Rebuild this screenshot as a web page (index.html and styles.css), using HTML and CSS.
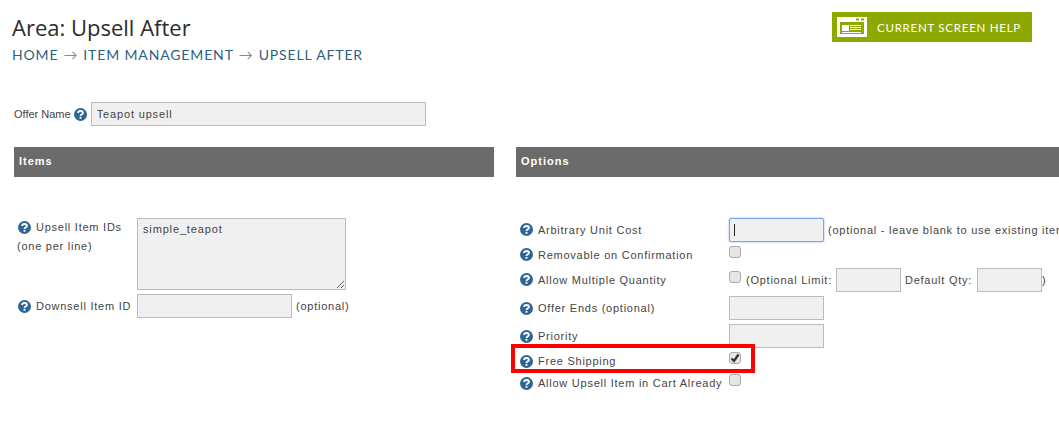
FILE: index.html
```html
<!DOCTYPE html>
<html lang="en">
<head>
  <meta charset="UTF-8">
  <title>Area: Upsell After</title>
  <link rel="stylesheet" href="styles.css">
</head>
<body>

  <!-- Page header -->
  <div class="cabecera">
    <div>
      <h1 class="titulo">Area: Upsell After</h1>
      <div class="migas">
        <span>Home</span><span class="flecha">&#8594;</span><span>Item Management</span><span class="flecha">&#8594;</span><span>Upsell After</span>
      </div>
    </div>
    <a class="boton-ayuda">
      <svg class="icono-ayuda" width="30" height="20" viewBox="0 0 30 20">
        <path fill="#fff" fill-rule="evenodd" d="M0 0H30V20H0ZM3 5V17H27V5ZM19 1.500V3.500H22V1.500ZM24 1.500V3.500H27V1.500Z"/>
        <path fill="#fff" d="M5 8H12V14H5ZM13 8H24V9H13ZM13 10H24V11H13ZM13 12H24V13H13ZM5 15H24V16H5Z"/>
      </svg>
      Current Screen Help
    </a>
  </div>

  <!-- Offer name -->
  <div class="fila-oferta">
    <label class="etiqueta-oferta">Offer Name</label>
    <svg class="ayuda" viewBox="0 0 14 14"><use href="#interrogante"/></svg>
    <input class="campo campo-oferta" type="text" value="Teapot upsell">
  </div>

  <div class="columnas">

    <!-- Items -->
    <div class="col-items">
      <div class="barra">Items</div>
      <div class="fila-items fila-ids">
        <div class="etiqueta-ids">
          <div class="etiqueta"><svg class="ayuda" viewBox="0 0 14 14"><use href="#interrogante"/></svg>Upsell Item IDs</div>
          <div class="nota">(one per line)</div>
        </div>
        <textarea class="campo area-ids">simple_teapot</textarea>
      </div>
      <div class="fila-items">
        <div class="etiqueta etiqueta-ids"><svg class="ayuda" viewBox="0 0 14 14"><use href="#interrogante"/></svg>Downsell Item ID</div>
        <input class="campo campo-down" type="text">
        <span class="texto">(optional)</span>
      </div>
    </div>

    <!-- Options -->
    <div class="col-opciones">
      <div class="barra">Options</div>
      <div class="opciones">
        <div class="opcion alto-25">
          <div class="etiqueta"><svg class="ayuda" viewBox="0 0 14 14"><use href="#interrogante"/></svg>Arbitrary Unit Cost</div>
          <div class="valor">
            <input class="campo campo-medio activo" type="text">
            <span class="cursor"></span>
            <span class="texto">(optional - leave blank to use existing item cost)</span>
          </div>
        </div>
        <div class="opcion alto-25">
          <div class="etiqueta"><svg class="ayuda" viewBox="0 0 14 14"><use href="#interrogante"/></svg>Removable on Confirmation</div>
          <div class="valor"><span class="casilla"></span></div>
        </div>
        <div class="opcion alto-25 fila-limite">
          <div class="etiqueta"><svg class="ayuda" viewBox="0 0 14 14"><use href="#interrogante"/></svg>Allow Multiple Quantity</div>
          <div class="valor">
            <span class="casilla"></span>
            <span class="texto texto-limite">(Optional Limit:</span>
            <input class="campo campo-corto" type="text">
            <span class="texto texto-qty">Default Qty:</span>
            <input class="campo campo-corto" type="text">
            <span class="texto">)</span>
          </div>
        </div>
        <div class="opcion alto-28">
          <div class="etiqueta"><svg class="ayuda" viewBox="0 0 14 14"><use href="#interrogante"/></svg>Offer Ends (optional)</div>
          <div class="valor"><input class="campo campo-medio" type="text"></div>
        </div>
        <div class="opcion alto-28">
          <div class="etiqueta"><svg class="ayuda" viewBox="0 0 14 14"><use href="#interrogante"/></svg>Priority</div>
          <div class="valor"><input class="campo campo-medio" type="text"></div>
        </div>
        <div class="opcion alto-22 marcada">
          <div class="etiqueta"><svg class="ayuda" viewBox="0 0 14 14"><use href="#interrogante"/></svg>Free Shipping</div>
          <div class="valor">
            <span class="casilla">
              <svg width="10" height="10" viewBox="0 0 10 10"><path fill="none" stroke="#333" stroke-width="2.200" d="M1.500 5.500L4 8L8.500 1.500"/></svg>
            </span>
          </div>
        </div>
        <div class="opcion alto-22">
          <div class="etiqueta"><svg class="ayuda" viewBox="0 0 14 14"><use href="#interrogante"/></svg>Allow Upsell Item in Cart Already</div>
          <div class="valor"><span class="casilla"></span></div>
        </div>
      </div>
    </div>
  </div>

  <!-- Shared help icon -->
  <svg class="oculto" width="0" height="0">
    <symbol id="interrogante" viewBox="0 0 14 14">
      <circle cx="7" cy="7" r="7" fill="#2d6596"/>
      <path fill="none" stroke="#fff" stroke-width="2" d="M4.400 5.500C4.400 4 5.600 3.200 7 3.200C8.500 3.200 9.600 4.100 9.600 5.300C9.600 6.800 7 6.800 7 8.600"/>
      <rect x="6" y="9.600" width="2" height="2" fill="#fff"/>
    </symbol>
  </svg>
</body>
</html>
```

FILE: styles.css
```css
html, body {
  height: 431px;
  overflow: hidden;
}

body {
  margin: 0;
  background-color: #fff;
  font-family: "Liberation Sans", Arial, sans-serif;
  font-size: 11px;
  letter-spacing: 0.750px;
  color: #444;
}

.cabecera {
  display: flex;
  justify-content: space-between;
  align-items: flex-start;
  padding: 12px 27px 0 12px;
  height: 90px;
  box-sizing: border-box;
}

.titulo {
  margin: 0;
  font-family: "Open Sans", sans-serif;
  font-size: 22px;
  line-height: 30px;
  font-weight: 400;
  letter-spacing: 0;
  color: #2b2b2b;
}

.migas {
  margin-top: 3px;
  font-family: Lato, sans-serif;
  font-size: 14px;
  line-height: 20px;
  letter-spacing: 0.860px;
  text-transform: uppercase;
  color: #2f5f80;
}

.flecha {
  margin: 0 5px;
  color: #888;
}

.boton-ayuda {
  display: flex;
  align-items: center;
  width: 200px;
  height: 30px;
  box-sizing: border-box;
  padding-left: 5px;
  background-color: #8fa800;
  font-family: Lato, sans-serif;
  font-size: 11.500px;
  font-weight: 400;
  letter-spacing: 0.750px;
  text-transform: uppercase;
  white-space: nowrap;
  color: #fff;
}

.icono-ayuda {
  margin-right: 10px;
}

.fila-oferta {
  display: flex;
  align-items: center;
  padding-left: 14px;
  margin-top: 12px;
  height: 24px;
}

.etiqueta-oferta {
  letter-spacing: 0;
  font-size: 11px;
}

.fila-oferta .ayuda {
  margin: 0 4px 0 3px;
}

.ayuda {
  flex: none;
  width: 13px;
  height: 13px;
  margin-right: 5px;
}

.campo {
  box-sizing: border-box;
  border: 1px solid #bbb;
  margin: 0;
  padding: 0 5px;
  background-color: #f0f0f0;
  font-family: "Liberation Sans", Arial, sans-serif;
  font-size: 11px;
  letter-spacing: 0.850px;
  color: #444;
  outline: none;
}

.campo-oferta {
  width: 335px;
  height: 24px;
}

.columnas {
  display: flex;
  gap: 22px;
  margin-top: 21px;
  padding-left: 14px;
}

.col-items {
  flex: none;
  width: 480px;
}

.col-opciones {
  flex: none;
  width: 560px;
}

.barra {
  height: 30px;
  line-height: 28px;
  padding-left: 5px;
  background-color: #6b6b6b;
  font-weight: 700;
  letter-spacing: 1px;
  color: #fff;
}

.fila-items {
  display: flex;
  align-items: center;
  margin-left: 4px;
}

.fila-ids {
  align-items: flex-start;
  margin-top: 41px;
  margin-bottom: 4px;
}

.etiqueta-ids {
  width: 119px;
  flex: none;
}

.etiqueta {
  display: flex;
  align-items: center;
  white-space: nowrap;
}

.nota {
  margin: 4px 0 0 -1px;
  line-height: 13px;
}

.fila-ids .etiqueta {
  height: 18px;
}

.area-ids {
  display: block;
  width: 209px;
  height: 72px;
  padding-top: 4px;
}

.campo-down {
  width: 155px;
  height: 24px;
  margin-right: 4px;
}

.opciones {
  margin-top: 40px;
  margin-left: 4px;
}

.opcion {
  display: flex;
  align-items: center;
}

.opcion .etiqueta {
  flex: none;
  width: 209px;
}

.valor {
  position: relative;
  display: flex;
  align-items: center;
  white-space: nowrap;
}

.alto-25 {
  height: 25px;
}

.alto-28 {
  height: 28px;
}

.alto-22 {
  height: 22px;
}

.fila-limite {
  margin-bottom: 2px;
}

.campo-medio {
  width: 95px;
  height: 24px;
  margin-right: 4px;
}

.activo {
  border: 1px solid #7aa7e8;
  border-radius: 2px;
  box-shadow: 0 0 2px #7aa7e8;
}

.cursor {
  position: absolute;
  left: 5px;
  top: 6px;
  width: 1px;
  height: 12px;
  background-color: #222;
}

.casilla {
  display: flex;
  align-items: center;
  justify-content: center;
  width: 10px;
  height: 10px;
  border: 1px solid #aaa;
  border-radius: 3px;
  background-color: #e6e6e6;
  margin-top: -6px;
  box-sizing: content-box;
}

.texto-limite {
  margin: 0 4px 0 5px;
}

.texto-qty {
  margin: 0 5px 0 4px;
}

.campo-corto {
  width: 65px;
  height: 24px;
}

.marcada::after {
  content: "";
  position: absolute;
  left: 511px;
  top: 344px;
  width: 244px;
  height: 29px;
  box-sizing: border-box;
  border: 4px solid #f00;
}

.oculto {
  position: absolute;
}
```
